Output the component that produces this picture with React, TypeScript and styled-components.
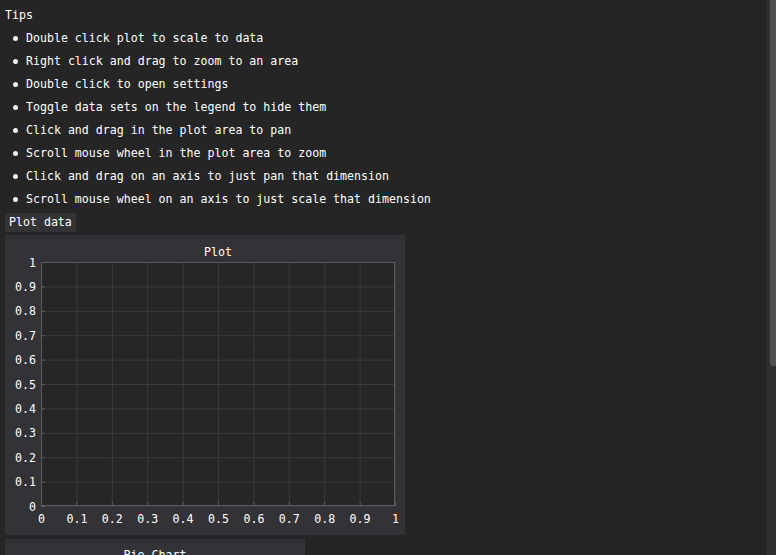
import React from "react";
import styled, { createGlobalStyle } from "styled-components";

const Global = createGlobalStyle`
  html, body { margin: 0; padding: 0; background: #252525; overflow: hidden; }
  body { font-family: "DejaVu Sans Mono", "Liberation Mono", monospace; font-size: 11.6px; color: #ffffff; }
`;

const Page = styled.div`
  display: flex;
  width: 776px;
  height: 555px;
  overflow: hidden;
  background: #252525;
`;

const Content = styled.div`
  flex: 1;
  display: flex;
  flex-direction: column;
  align-items: flex-start;
  padding: 4px 0 0 5px;
  min-width: 0;
`;

const Scrollbar = styled.div`
  width: 10px;
  flex: none;
  background: #2f2f32;
  display: flex;
  flex-direction: column;
  padding-left: 3px;
  box-sizing: border-box;
  border-left: 1px solid #2b2b2d;
`;

const Thumb = styled.div`
  height: 366px;
  background: #4f4f52;
  border-radius: 0 0 0 3px;
`;

const Line = styled.div`
  height: 23px;
  line-height: 23px;
  white-space: pre;
`;

const List = styled.ul`
  list-style: none;
  margin: 0;
  padding: 0;
`;

const Item = styled.li`
  height: 23px;
  line-height: 23px;
  display: flex;
  align-items: center;
  white-space: pre;
`;

const Bullet = styled.span`
  width: 5px;
  height: 5px;
  border-radius: 50%;
  background: #f0f0f0;
  margin: 0 8px 0 8px;
  flex: none;
`;

const Button = styled.div`
  margin-top: 2px;
  height: 19px;
  line-height: 19px;
  padding: 0 4px;
  background: #333336;
  white-space: pre;
`;

const Frame = styled.div<{ $w: number; $h: number }>`
  margin-top: 3px;
  width: ${(p) => p.$w}px;
  height: ${(p) => p.$h}px;
  background: #333337;
  flex: none;
`;

const PieFrame = styled(Frame)`
  margin-top: 4px;
`;

const FrameTitle = styled.div`
  text-align: center;
  padding-top: 9px;
  line-height: 15px;
`;

const ChartSvg = styled.svg`
  display: block;
  font-family: "DejaVu Sans Mono", "Liberation Mono", monospace;
  font-size: 11.6px;
`;

const tips = [
  "Double click plot to scale to data",
  "Right click and drag to zoom to an area",
  "Double click to open settings",
  "Toggle data sets on the legend to hide them",
  "Click and drag in the plot area to pan",
  "Scroll mouse wheel in the plot area to zoom",
  "Click and drag on an axis to just pan that dimension",
  "Scroll mouse wheel on an axis to just scale that dimension",
];

const ticks = [0, 0.1, 0.2, 0.3, 0.4, 0.5, 0.6, 0.7, 0.8, 0.9, 1];
const label = (v: number) => (v === 0 ? "0" : v === 1 ? "1" : v.toFixed(1));

function Plot() {
  const x0 = 36, x1 = 390, y0 = 27, y1 = 271;
  const px = (v: number) => x0 + (x1 - x0) * v;
  const py = (v: number) => y1 - (y1 - y0) * v;
  return (
    <ChartSvg width={400} height={300} viewBox="0 0 400 300">
      <text x={213} y={21} fill="#fff" textAnchor="middle">Plot</text>
      <rect x={x0} y={y0} width={x1 - x0} height={y1 - y0} fill="#262627" />
      {ticks.map((t) => (
        <g key={t}>
          <line x1={px(t) + 0.5} x2={px(t) + 0.5} y1={y0} y2={y1} stroke="#3b3b3c" />
          <line x1={x0} x2={x1} y1={py(t) + 0.5} y2={py(t) + 0.5} stroke="#3b3b3c" />
          <line x1={px(t) + 0.5} x2={px(t) + 0.5} y1={y1 - 4} y2={y1} stroke="#5c5c5f" />
          <line x1={x0} x2={x0 + 4} y1={py(t) + 0.5} y2={py(t) + 0.5} stroke="#5c5c5f" />
          <text x={px(t) + 0.5} y={288} fill="#fff" textAnchor="middle">{label(t)}</text>
          <text x={31} y={py(t) + 4.5} fill="#fff" textAnchor="end">{label(t)}</text>
        </g>
      ))}
      <rect x={x0 + 0.5} y={y0 + 0.5} width={x1 - x0 - 1} height={y1 - y0 - 1} fill="none" stroke="#5c5c5f" />
    </ChartSvg>
  );
}

export default function App() {
  return (
    <Page>
      <Global />
      <Content>
        <Line>Tips</Line>
        <List>
          {tips.map((t) => (
            <Item key={t}>
              <Bullet />
              {t}
            </Item>
          ))}
        </List>
        <Button>Plot data</Button>
        <Frame $w={400} $h={300}>
          <Plot />
        </Frame>
        <PieFrame $w={300} $h={300}>
          <FrameTitle>Pie Chart</FrameTitle>
        </PieFrame>
      </Content>
      <Scrollbar>
        <Thumb />
      </Scrollbar>
    </Page>
  );
}
